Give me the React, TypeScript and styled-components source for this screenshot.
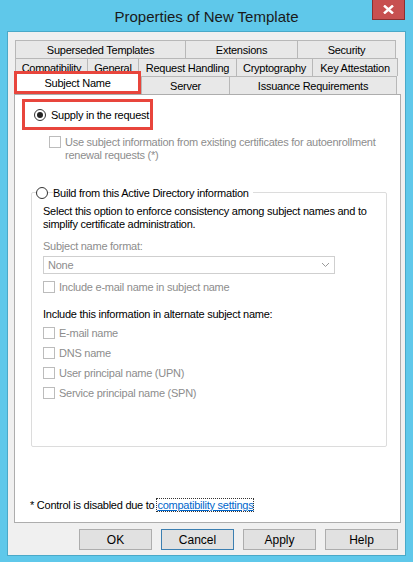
import React from "react";
import styled, { createGlobalStyle } from "styled-components";

const G = createGlobalStyle`
  html,body{margin:0;padding:0;background:#5fc8ea;}
  *{box-sizing:border-box;}
  body{font-family:"Liberation Sans",Arial,sans-serif;font-size:11px;letter-spacing:-0.25px;color:#000;white-space:nowrap;}
`;
const Frame = styled.div`width:413px;height:562px;background:#5fc8ea;display:flex;flex-direction:column;padding:0 7px 6px 7px;`;
const TitleBar = styled.div`height:31px;position:relative;display:flex;align-items:center;justify-content:center;font-size:15px;letter-spacing:0;color:#1a1a1a;padding-top:2px;`;
const Close = styled.div`position:absolute;right:1px;top:0;width:33px;height:20px;background:#c75050;border:1px solid #8a3030;border-top:none;display:flex;align-items:center;justify-content:center;`;
const Client = styled.div`flex:1;background:#f0f0f0;border:1px solid #4aa9c8;padding:8px 5px 0 5px;display:flex;flex-direction:column;`;
const TabRow = styled.div<{$ml?:number}>`display:flex;height:18px;margin-left:${p=>p.$ml||2}px;`;
const Tab = styled.div<{$w:number}>`width:${p=>p.$w}px;border:1px solid #b8b8b8;border-bottom:none;background:#e8e8e8;margin-right:-1px;display:flex;align-items:center;justify-content:center;overflow:hidden;`;
const SelTab = styled.div`width:127px;height:23px;margin-top:-5px;margin-bottom:-1px;border:3px solid #e8453c;background:#fff;display:flex;align-items:center;justify-content:center;position:relative;z-index:2;`;
const Panel = styled.div`height:429px;margin-left:1px;width:387px;background:#fff;border:1px solid #adadad;padding:4px 0 0 7px;display:flex;flex-direction:column;position:relative;`;
const Hl = styled.div`display:inline-flex;align-items:center;gap:5px;border:3px solid #e8453c;width:131px;height:31px;padding-left:9px;`;
const Radio = styled.span<{$on?:boolean}>`width:12px;height:12px;border-radius:50%;border:1px solid #333;background:#fff;display:inline-flex;align-items:center;justify-content:center;flex:none;
  &::after{content:"";width:6px;height:6px;border-radius:50%;background:${p=>p.$on?"#222":"transparent"};}`;
const Box = styled.span`width:12px;height:12px;border:1px solid #bcbcbc;background:#fff;flex:none;display:inline-block;`;
const CheckRow = styled.div<{$top:number;$ml:number}>`display:flex;gap:4px;align-items:flex-start;margin-top:${p=>p.$top}px;margin-left:${p=>p.$ml}px;color:#8d8d8d;line-height:13px;`;
const RadioRow = styled.div`display:flex;align-items:center;gap:5px;margin-top:25px;margin-left:14px;position:relative;z-index:1;`;
const RLabel = styled.span`background:#fff;padding-right:4px;`;
const Group = styled.div`margin:-7px 0 0 9px;width:356px;height:255px;border:1px solid #dcdcdc;border-radius:2px;padding:12px 0 0 11px;display:flex;flex-direction:column;`;
const P = styled.div<{$c?:string;$top?:number}>`color:${p=>p.$c||"#000"};margin-top:${p=>p.$top||0}px;line-height:13px;`;
const Select = styled.div`margin-top:3px;width:292px;height:18px;border:1px solid #cfcfcf;display:flex;align-items:center;justify-content:space-between;padding:0 4px;color:#8d8d8d;`;
const Footer = styled.div`margin-top:auto;margin-bottom:11px;margin-left:8px;display:flex;gap:3px;align-items:baseline;`;
const Link = styled.span`color:#0066cc;text-decoration:underline;outline:1px dotted #333;`;
const Buttons = styled.div`display:flex;justify-content:flex-end;gap:9px;padding:6px 2px 0 0;`;
const Btn = styled.div<{$def?:boolean}>`width:73px;height:21px;border:1px solid ${p=>p.$def?"#3c7fb1":"#adadad"};background:#e1e1e1;display:flex;align-items:center;justify-content:center;font-size:12px;letter-spacing:0;`;

export default function App(){
  return <Frame><G/>
    <TitleBar>Properties of New Template
      <Close><svg width="11" height="9" viewBox="0 0 11 9"><path d="M1 0.5L10 8.5M10 0.5L1 8.5" stroke="#fff" strokeWidth="2.4"/></svg></Close>
    </TitleBar>
    <Client>
      <TabRow $ml={2}><Tab $w={171}>Superseded Templates</Tab><Tab $w={113}>Extensions</Tab><Tab $w={99}>Security</Tab></TabRow>
      <TabRow $ml={2}><Tab $w={73}>Compatibility</Tab><Tab $w={52}>General</Tab><Tab $w={99}>Request Handling</Tab><Tab $w={77}>Cryptography</Tab><Tab $w={86}>Key Attestation</Tab></TabRow>
      <TabRow $ml={1}><SelTab>Subject Name</SelTab><Tab $w={89}>Server</Tab><Tab $w={168}>Issuance Requirements</Tab></TabRow>
      <Panel>
        <Hl><Radio $on/>Supply in the request</Hl>
        <CheckRow $top={6} $ml={27}><Box/><span>Use subject information from existing certificates for autoenrollment<br/>renewal requests (*)</span></CheckRow>
        <RadioRow><Radio/><RLabel>Build from this Active Directory information</RLabel></RadioRow>
        <Group>
          <P>Select this option to enforce consistency among subject names and to<br/>simplify certificate administration.</P>
          <P $c="#8d8d8d" $top={9}>Subject name format:</P>
          <Select>None<svg width="9" height="6" viewBox="0 0 9 6"><path d="M1 1L4.5 4.5L8 1" stroke="#9a9a9a" fill="none"/></svg></Select>
          <CheckRow $top={7} $ml={0}><Box/>Include e-mail name in subject name</CheckRow>
          <P $top={14}>Include this information in alternate subject name:</P>
          <CheckRow $top={6} $ml={0}><Box/>E-mail name</CheckRow>
          <CheckRow $top={7} $ml={0}><Box/>DNS name</CheckRow>
          <CheckRow $top={7} $ml={0}><Box/>User principal name (UPN)</CheckRow>
          <CheckRow $top={7} $ml={0}><Box/>Service principal name (SPN)</CheckRow>
        </Group>
        <Footer><span>* Control is disabled due to</span><Link>compatibility settings</Link></Footer>
      </Panel>
      <Buttons><Btn>OK</Btn><Btn $def>Cancel</Btn><Btn>Apply</Btn><Btn>Help</Btn></Buttons>
    </Client>
  </Frame>;
}
